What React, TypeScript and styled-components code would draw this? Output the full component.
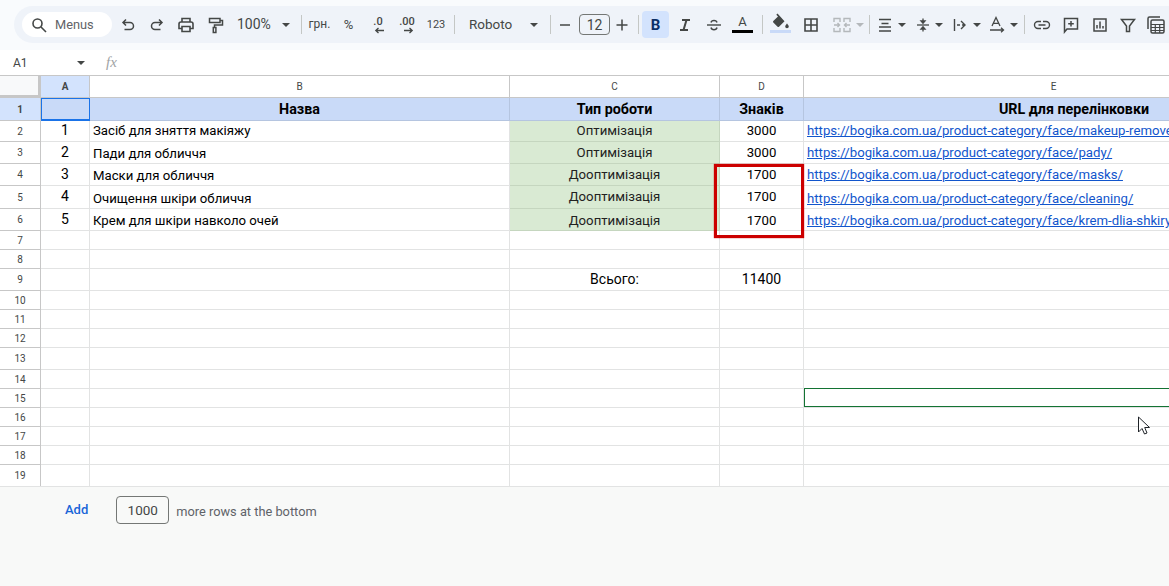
import React from "react";
import styled, { createGlobalStyle } from "styled-components";

const Global = createGlobalStyle`
  html, body { margin: 0; padding: 0; background: #fff; overflow: hidden; }
  body { font-family: Roboto, "Liberation Sans", sans-serif; color: #000; }
`;

const Page = styled.div`
  width: 1169px; height: 586px; display: flex; flex-direction: column; overflow: hidden; position: relative; background: #fff;
`;
const TopBar = styled.div`
  height: 50px; flex: none; background: #f9fbfd; padding: 6px 0 0 14px; box-sizing: border-box; overflow: hidden;
`;
const Toolbar = styled.div`
  width: 1300px; height: 37px; background: #eff3f9; border-radius: 19px 0 0 19px; display: flex; align-items: center; padding-left: 8px; box-sizing: border-box; color: #444746;
`;
const SearchPill = styled.div`
  width: 90px; height: 25px; border-radius: 13px; background: #fff; display: flex; align-items: center; flex: none; padding-left: 8px; box-sizing: border-box; gap: 7px; font-size: 12.8px; color: #5f6368; margin-right: 1px;
`;
const Tool = styled.div<{ $w?: number; $gap?: number }>`
  width: ${p => p.$w ?? 29}px; height: 27px; flex: none; display: flex; align-items: center; justify-content: center; gap: ${p => p.$gap ?? 0}px; color: #444746; font-size: 13px; position: relative;
`;
const LabelTool = styled(Tool)<{ $pad: number }>`
  justify-content: flex-start; padding-left: ${p => p.$pad}px; box-sizing: border-box;
`;
const BoldTool = styled(Tool)`
  background: #d3e3fd; border-radius: 4px; color: #0b2f66; margin-right: 1px; font-weight: 700; font-size: 15px;
`;
const Sep = styled.div<{ $l?: number; $r?: number }>`
  width: 1px; height: 19px; background: #c4c7c5; flex: none; margin: 0 ${p => p.$r ?? 3}px 0 ${p => p.$l ?? 3}px;
`;
const ToolText = styled.span<{ $size?: number; $gap?: number }>`
  font-size: ${p => p.$size ?? 13}px; color: #444746; white-space: nowrap; margin: -1px ${p => p.$gap ?? 0}px 0 0;
`;
const ColorLetter = styled.span`
  font-size: 13px; color: #444746; margin-top: -6px; line-height: 14px;
`;
const Caret = styled.i<{ $dim?: boolean }>`
  display: block; flex: none; width: 0; height: 0; border-left: 4px solid transparent; border-right: 4px solid transparent; border-top: 4px solid ${p => (p.$dim ? "#b4b8bb" : "#444746")};
`;
const FontBox = styled.div`
  width: 31px; height: 21px; border: 1px solid #747775; border-radius: 4px; box-sizing: border-box; display: flex; align-items: center; justify-content: center; font-size: 14px; flex: none; color: #444746; margin: 0 1px 0 4px;
`;
const ColorBar = styled.i<{ $c: string }>`
  position: absolute; left: 4px; right: 4px; bottom: 5px; height: 3px; background: ${p => p.$c};
`;
const FillHolder = styled.span`
  margin-top: -8px; display: flex;
`;
const FormulaBar = styled.div`
  height: 25px; flex: none; background: #fff; display: flex; align-items: center; font-size: 12px; color: #222;
`;
const NameBox = styled.div`
  width: 92px; padding: 0 7px 0 13px; box-sizing: border-box; display: flex; align-items: center; justify-content: space-between; color: #444746;
`;
const Fx = styled.span`
  font-family: "Liberation Serif", serif; font-style: italic; font-size: 15px; color: #a0a3a5; margin-left: 14px;
`;
const Sheet = styled.div`
  display: grid; flex: none; width: 1169px; overflow: hidden; position: relative;
  grid-template-columns: 41px 49px 420px 210px 84px 500px;
  grid-template-rows: 22px 23px 21px 22px 22px 23px 22px 19px 19px 22px 19px 19px 19px 22px 19px 19px 19px 19px 19px 22px;
  border-top: 1px solid #c7c7c7; height: 411px; box-sizing: border-box;
`;
const Cell = styled.div<{ $align?: string; $size?: number; $top?: number }>`
  box-sizing: border-box; border-right: 1px solid #e2e3e3; border-bottom: 1px solid #e2e3e3;
  background: #fff; text-align: ${p => p.$align ?? "left"}; white-space: nowrap; overflow: hidden;
  font-size: ${p => p.$size ?? 13.2}px; line-height: 19px; padding: ${p => p.$top ?? 0}px 3px 0; min-width: 0; color: #000;
`;
const GreenCell = styled(Cell)`
  background: #d9ead3; border-color: #c5d6bf; text-align: center; color: #222;
`;
const TitleCell = styled(Cell)`
  background: #c9daf8; border-color: #b5c5e0; font-weight: 700; font-size: 14.3px; text-align: center; line-height: 23px;
`;
const TitleUrlCell = styled(TitleCell)`
  padding-left: 44px;
`;
const ActiveA = styled(TitleCell)`
  border: 1px solid #1a73e8; border-bottom-width: 2px;
`;
const ColHead = styled.div<{ $active?: boolean }>`
  box-sizing: border-box; border-right: 1px solid #c7c7c7; border-bottom: 1px solid #c7c7c7;
  background: ${p => (p.$active ? "#d3e3fd" : "#fff")}; font-size: 10px; font-weight: ${p => (p.$active ? 700 : 400)};
  display: flex; align-items: center; justify-content: center; color: #444746;
`;
const Corner = styled.div`
  box-sizing: border-box; background: #f8f9fa; border-right: 3px solid #c7c7c7; border-bottom: 3px solid #c7c7c7;
`;
const RowHead = styled(ColHead)``;
const Link = styled.span`
  color: #1155cc; text-decoration: underline;
`;
const RedBox = styled.div`
  position: absolute; left: 714px; top: 88px; width: 90px; height: 74px; border: 3px solid #cc0000; box-sizing: border-box; pointer-events: none; box-shadow: 0 0 1px #cc0000;
`;
const GreenBox = styled.div`
  position: absolute; left: 804px; top: 312px; width: 380px; height: 19px; border: 1px solid #137333; box-sizing: border-box;
`;
const Cursor = styled.svg`
  position: absolute; left: 1137px; top: 416px;
`;
const Footer = styled.div`
  flex: 1; background: #f8f9f8; border-top: 1px solid #e2e3e3; display: flex; align-items: flex-start; padding: 9px 0 0 65px; font-size: 12.8px; color: #5f6368; box-sizing: border-box;
`;
const AddLink = styled.span`
  color: #1a66d8; font-weight: 500; margin-right: 28px; line-height: 28px; font-size: 13px;
`;
const RowsInput = styled.div`
  width: 53px; height: 28px; border: 1px solid #747775; border-radius: 4px; box-sizing: border-box; display: flex; align-items: center; justify-content: center; font-size: 13.5px; color: #444746; margin-right: 7px;
`;
const FooterText = styled.span`
  line-height: 32px;
`;

const Ico = ({ w = 18, h = 18, sw = 1.5, c = "#444746", children }: { w?: number; h?: number; sw?: number; c?: string; children: React.ReactNode }) => (
  <svg width={w} height={h} viewBox={`0 0 ${w} ${h}`} fill="none" stroke={c} strokeWidth={sw}>{children}</svg>
);

const SearchI = () => <Ico sw={1.6}><circle cx="7.500" cy="7.500" r="4.500" /><path d="m11 11 5 5" /></Ico>;
const UndoI = () => <Ico><path d="M7 3.500 4 6.500l3 3M4 6.500h7a3.500 3.500 0 0 1 0 7H5.500" /></Ico>;
const RedoI = () => <Ico><path d="m11 3.500 3 3-3 3M14 6.500H7a3.500 3.500 0 0 0 0 7h5.500" /></Ico>;
const PrintI = () => (
  <Ico w={18} h={18} sw={1.6}>
    <path d="M5 6V2.500h8V6M5 12.500H2V8a2 2 0 0 1 2-2h10a2 2 0 0 1 2 2v4.500h-3" />
    <path d="M5 10.500h8v5H5z" />
  </Ico>
);
const PaintI = () => (
  <Ico sw={1.5}>
    <path d="M3.500 2.500h10.500v4H3.500z" />
    <path d="M14 4.500h2.500v4.500H8.500v2.500" />
    <path d="M7.300 11.500h2.600v5H7.300z" />
  </Ico>
);
const Minus = () => <Ico w={14} h={14}><path d="M2 7h10" /></Ico>;
const Plus = () => <Ico w={14} h={14}><path d="M1.500 7h11M7 1.500v11" /></Ico>;
const Italic = () => <Ico w={14} h={14} sw={2}><path d="M4 2h8M2 12h8M8.500 2l-3 10" /></Ico>;
const Strike = () => (
  <Ico sw={1.4}>
    <path d="M2 9h14" />
    <path d="M6 6.500C6.300 5 7.500 4.500 9 4.500s2.700.6 3 2M12 11.500c-.3 1.500-1.500 2.200-3 2.200s-2.700-.7-3-2.200" />
  </Ico>
);
const FillI = () => (
  <svg width="18" height="16" viewBox="0 0 18 16" fill="#444746">
    <path d="M5.500.5 4.300 1.700l1.700 1.700L1.300 8c-.4.400-.4 1 0 1.400l4.300 4.300c.4.400 1 .4 1.400 0l5.500-5.500z" />
    <path d="M15 10.500s-1.800 2-1.800 3a1.800 1.800 0 0 0 3.600 0c0-1-1.800-3-1.800-3z" />
  </svg>
);
const BorderI = () => <Ico sw={1.6}><path d="M3 3h12v12H3zM9 3v12M3 9h12" /></Ico>;
const Merge = () => (
  <Ico w={20} h={18} sw={1.4} c="#b4b8bb">
    <path d="M2 6V2.500h6V6M2 12v3.500h6V12M12 6V2.500h6V6M12 12v3.500h6V12M2 9h5M5.500 7l2 2-2 2M18 9h-5M14.500 7l-2 2 2 2" />
  </Ico>
);
const AlignI = () => <Ico w={16} h={16} sw={1.4}><path d="M2 2.500h12M4.500 6.500h7M2 10h12M2 14h12" /></Ico>;
const VAlignI = () => (
  <Ico w={16} h={18} sw={1.3}>
    <path d="M2 9h12" />
    <path d="M8 2.500V6.500M8 11.500v4" />
    <path d="M6 5h4L8 7.200zM6 13h4l-2-2.200z" fill="#444746" />
  </Ico>
);
const WrapI = () => (
  <Ico sw={1.4}>
    <path d="M3.500 3v12M6 9h3M11 9h2.500M10 5l4 4-4 4" />
  </Ico>
);
const RotateI = () => (
  <svg width="18" height="20" viewBox="0 0 18 20" fill="none" stroke="#444746" strokeWidth="1.300">
    <path d="M4 11 8 2.500 12 11M5.300 8.300h5.400" />
    <path d="M2 15h13M13 12.800l2.500 2.200-2.500 2.200" />
  </svg>
);
const LinkI = () => (
  <Ico w={18} h={12} sw={1.4}>
    <path d="M8 2.500H5a3.500 3.500 0 0 0 0 7h3M10 2.500h3a3.500 3.500 0 0 1 0 7h-3M5.500 6h7" />
  </Ico>
);
const CommentI = () => (
  <Ico sw={1.5}>
    <path d="M2.500 2.500h13v10.500H5l-2.500 3z" />
    <path d="M9 5v5.500M6.200 7.700h5.600" />
  </Ico>
);
const ChartI = () => (
  <Ico sw={1.5}>
    <path d="M3 3h12v12H3z" />
    <path d="M6 12.500V9M9 12.500V5.500M12 12.500V10" />
  </Ico>
);
const FilterI = () => <Ico sw={1.5}><path d="M2.500 3.500h13L10.500 10v5.500h-3V10z" /></Ico>;
const FuncI = () => (
  <Ico w={20} h={20} sw={1.5}>
    <path d="M2 14V3.500A1.500 1.500 0 0 1 3.500 2H14" />
    <rect x="5" y="5" width="13" height="13" rx="1.500" />
    <path d="M5 9.500h13M5 12.500h13M5 15.500h13M9.300 9.500V18M13.700 9.500V18" strokeWidth="1.200" />
  </Ico>
);
const DecIcon = ({ label, right }: { label: string; right?: boolean }) => (
  <svg width="24" height="20" viewBox="0 0 24 20" fill="none">
    <text x="12" y="10" textAnchor="middle" fontSize="11" fontFamily="Roboto" fontWeight="500" fill="#444746">{label}</text>
    {right
      ? <path d="M9 15.500h8M14.500 13l2.700 2.500-2.700 2.500" stroke="#444746" strokeWidth="1.300" />
      : <path d="M18 15.500h-8M12.500 13l-2.700 2.500 2.700 2.500" stroke="#444746" strokeWidth="1.300" />}
  </svg>
);

const rowData: { n: number; name: string; type: string; count: number; url: string; tops: number[] }[] = [
  { n: 1, name: "Засіб для зняття макіяжу", type: "Оптимізація", count: 3000, url: "https://bogika.com.ua/product-category/face/makeup-remover/", tops: [0, 0, 0] },
  { n: 2, name: "Пади для обличчя", type: "Оптимізація", count: 3000, url: "https://bogika.com.ua/product-category/face/pady/", tops: [1, 2, 1] },
  { n: 3, name: "Маски для обличчя", type: "Дооптимізація", count: 1700, url: "https://bogika.com.ua/product-category/face/masks/", tops: [1, 2, 1] },
  { n: 4, name: "Очищення шкіри обличчя", type: "Дооптимізація", count: 1700, url: "https://bogika.com.ua/product-category/face/cleaning/", tops: [1, 3, 3] },
  { n: 5, name: "Крем для шкіри навколо очей", type: "Дооптимізація", count: 1700, url: "https://bogika.com.ua/product-category/face/krem-dlia-shkiry-navkolo-ochei/", tops: [1, 2, 2] },
];

const emptyRows = [7, 8, 9, 10, 11, 12, 13, 14, 15, 16, 17, 18, 19];

export default function App() {
  return (
    <Page>
      <Global />
      <TopBar>
        <Toolbar>
          <SearchPill><SearchI />Menus</SearchPill>
          <Tool><UndoI /></Tool>
          <Tool><RedoI /></Tool>
          <Tool><PrintI /></Tool>
          <Tool><PaintI /></Tool>
          <LabelTool $w={67} $pad={8}><ToolText $size={14} $gap={11}>100%</ToolText><Caret /></LabelTool>
          <Sep $l={5} />
          <Tool><ToolText $size={12}>грн.</ToolText></Tool>
          <Tool><ToolText>%</ToolText></Tool>
          <Tool><DecIcon label=".0" /></Tool>
          <Tool><DecIcon label=".00" right /></Tool>
          <Tool $w={30}><ToolText $size={11}>123</ToolText></Tool>
          <Sep />
          <LabelTool $w={91} $pad={11}><ToolText $size={13.5} $gap={18}>Roboto</ToolText><Caret /></LabelTool>
          <Sep $l={1} $r={4} />
          <Tool $w={20}><Minus /></Tool>
          <FontBox>12</FontBox>
          <Tool $w={22}><Plus /></Tool>
          <Sep $l={5} />
          <BoldTool $w={27}>B</BoldTool>
          <Tool><Italic /></Tool>
          <Tool><Strike /></Tool>
          <Tool><ColorLetter>A</ColorLetter><ColorBar $c="#000" /></Tool>
          <Sep $l={5} />
          <Tool><FillHolder><FillI /></FillHolder><ColorBar $c="#c9daf8" /></Tool>
          <Tool $w={31}><BorderI /></Tool>
          <Tool $w={43} $gap={4}><Merge /><Caret $dim /></Tool>
          <Sep $l={0} />
          <Tool $w={37} $gap={5}><AlignI /><Caret /></Tool>
          <Tool $w={37} $gap={4}><VAlignI /><Caret /></Tool>
          <Tool $w={37} $gap={4}><WrapI /><Caret /></Tool>
          <Tool $w={37} $gap={4}><RotateI /><Caret /></Tool>
          <Sep />
          <Tool $w={28}><LinkI /></Tool>
          <Tool><CommentI /></Tool>
          <Tool><ChartI /></Tool>
          <Tool $w={28}><FilterI /></Tool>
          <Tool $w={27}><FuncI /></Tool>
        </Toolbar>
      </TopBar>
      <FormulaBar>
        <NameBox>A1<Caret /></NameBox>
        <Fx>fx</Fx>
      </FormulaBar>
      <Sheet>
        <Corner />
        <ColHead $active>A</ColHead>
        <ColHead>B</ColHead>
        <ColHead>C</ColHead>
        <ColHead>D</ColHead>
        <ColHead>E</ColHead>

        <RowHead $active>1</RowHead>
        <ActiveA />
        <TitleCell>Назва</TitleCell>
        <TitleCell>Тип роботи</TitleCell>
        <TitleCell>Знаків</TitleCell>
        <TitleUrlCell>URL для перелінковки</TitleUrlCell>

        {rowData.map(({ n, name, type, count, url, tops }, i) => (
          <React.Fragment key={n}>
            <RowHead>{i + 2}</RowHead>
            <Cell $align="center" $size={14} $top={tops[0]}>{n}</Cell>
            <Cell $top={tops[1]}>{name}</Cell>
            <GreenCell $top={i === 4 ? 2 : tops[0]}>{type}</GreenCell>
            <Cell $align="center" $top={i === 4 ? 2 : tops[0]}>{count}</Cell>
            <Cell $top={tops[2]}><Link>{url}</Link></Cell>
          </React.Fragment>
        ))}

        {emptyRows.map(r => (
          <React.Fragment key={r}>
            <RowHead>{r}</RowHead>
            <Cell />
            <Cell />
            <Cell $align="center" $size={14} $top={1}>{r === 9 ? "Всього:" : ""}</Cell>
            <Cell $align="center" $size={14} $top={1}>{r === 9 ? "11400" : ""}</Cell>
            <Cell />
          </React.Fragment>
        ))}
        <RedBox />
        <GreenBox />
      </Sheet>
      <Footer>
        <AddLink>Add</AddLink>
        <RowsInput>1000</RowsInput>
        <FooterText>more rows at the bottom</FooterText>
      </Footer>
      <Cursor width="14" height="20" viewBox="0 0 14 20">
        <path d="M1.500 1v15l3.500-3.500 2.500 5.500 2.500-1-2.300-5.500h4.800z" fill="#fff" stroke="#1f2328" strokeWidth="1" />
      </Cursor>
    </Page>
  );
}
